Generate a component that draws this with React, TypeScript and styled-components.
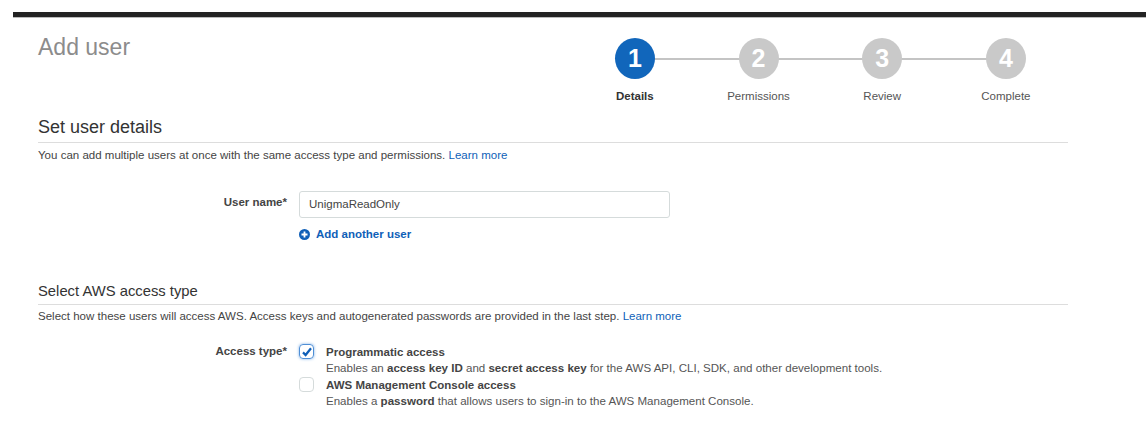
import styled, { createGlobalStyle } from 'styled-components'

const GlobalStyle = createGlobalStyle`
  html, body {
    margin: 0;
    background: #fff;
    font-family: "Liberation Sans", Arial, sans-serif;
    color: #444;
  }
`

const Page = styled.div`
  width: 1146px;
  height: 448px;
  padding: 12px 0 0 13px;
  box-sizing: border-box;
  overflow: hidden;
`

const TopBar = styled.div`
  height: 5px;
  background: #232323;
  border-bottom: 1px solid #bbb;
`

const Content = styled.div`
  width: 1030px;
  margin-left: 25px;
`

const Header = styled.div`
  display: flex;
  justify-content: space-between;
  height: 99px;
`

const PageTitle = styled.h1`
  margin: 15px 0 0;
  font-size: 23px;
  line-height: 28px;
  font-weight: 400;
  color: #8c8c8c;
`

const Stepper = styled.div`
  display: flex;
  margin-top: 20px;
  width: 495px;
`

const Step = styled.div`
  position: relative;
  width: 123.7px;
  display: flex;
  flex-direction: column;
  align-items: center;

  &:not(:last-child)::after {
    content: '';
    position: absolute;
    top: 20px;
    left: 50%;
    width: 100%;
    height: 2px;
    background: #c4c4c4;
  }
`

const Circle = styled.div<{ $active?: boolean }>`
  position: relative;
  z-index: 1;
  width: 40px;
  height: 41px;
  border-radius: 50%;
  background: ${(p) => (p.$active ? '#1166bb' : '#c9c9c9')};
  color: #fff;
  font-size: 25px;
  font-weight: 700;
  line-height: 41px;
  text-align: center;
`

const StepLabel = styled.div<{ $active?: boolean }>`
  margin-top: 10px;
  font-size: 11.5px;
  line-height: 14px;
  font-weight: ${(p) => (p.$active ? 700 : 400)};
  color: ${(p) => (p.$active ? '#333' : '#555')};
`

const SectionTitle = styled.h2<{ $small?: boolean }>`
  margin: 0;
  padding-bottom: 4px;
  font-size: ${(p) => (p.$small ? '14.8px' : '18px')};
  line-height: ${(p) => (p.$small ? '18px' : '21px')};
  font-weight: 400;
  color: #333;
  border-bottom: 1px solid #ddd;
`

const Hint = styled.p`
  margin: 5px 0 0;
  font-size: 11.53px;
  line-height: 14px;
  color: #444;
`

const Link = styled.a`
  color: #0f5fb8;
`

const FormRow = styled.div`
  display: grid;
  grid-template-columns: 249px 1fr;
  column-gap: 12px;
`

const Label = styled.div`
  text-align: right;
  font-size: 11.5px;
  font-weight: 700;
  line-height: 14px;
  color: #444;
`

const UserRow = styled(FormRow)`
  margin-top: 29px;
`

const UserLabel = styled(Label)`
  margin-top: 4px;
`

const Input = styled.div`
  width: 371px;
  height: 27px;
  box-sizing: border-box;
  padding-left: 9px;
  border: 1px solid #d5dbdb;
  border-radius: 3px;
  font-size: 11.5px;
  line-height: 25px;
  color: #444;
`

const AddUser = styled.div`
  display: flex;
  align-items: center;
  gap: 6px;
  margin-top: 9px;
  font-size: 11.5px;
  line-height: 14px;
  font-weight: 700;
  color: #0f5fb8;
`

const SecondSection = styled.div`
  margin-top: 41px;

  ${Hint} {
    margin-top: 4px;
  }
`

const AccessRow = styled(FormRow)`
  margin-top: 21px;
`

const Options = styled.div`
  display: flex;
  flex-direction: column;
`

const Option = styled.div`
  display: flex;
  gap: 12px;
  height: 33px;
`

const Box = styled.div<{ $checked?: boolean }>`
  width: 13px;
  height: 13px;
  flex: none;
  display: flex;
  align-items: center;
  justify-content: center;
  border-radius: 4px;
  border: 1px solid ${(p) => (p.$checked ? '#4f8fd6' : '#d5dbdb')};
  box-shadow: ${(p) => (p.$checked ? '0 0 3px #7fb0e6' : 'none')};
`

const OptionTitle = styled.div`
  font-size: 11.5px;
  line-height: 16px;
  font-weight: 700;
  color: #444;
`

const OptionText = styled.div`
  font-size: 11.55px;
  line-height: 17px;
  color: #555;

  b {
    color: #444;
  }
`

const steps = ['Details', 'Permissions', 'Review', 'Complete']

const App = () => {
  return (
    <Page>
      <GlobalStyle />
      <TopBar />
      <Content>
        <Header>
          <PageTitle>Add user</PageTitle>
          <Stepper>
            {steps.map((s, i) => (
              <Step key={s}>
                <Circle $active={i === 0}>{i + 1}</Circle>
                <StepLabel $active={i === 0}>{s}</StepLabel>
              </Step>
            ))}
          </Stepper>
        </Header>
        <SectionTitle>Set user details</SectionTitle>
        <Hint>
          You can add multiple users at once with the same access type and permissions. <Link>Learn more</Link>
        </Hint>
        <UserRow>
          <UserLabel>User name*</UserLabel>
          <div>
            <Input>UnigmaReadOnly</Input>
            <AddUser>
              <svg width='11' height='11' viewBox='0 0 11 11'>
                <circle cx='5.5' cy='5.5' r='5.5' fill='#0f5fb8' />
                <path d='M5.5 2.5v6M2.5 5.5h6' stroke='#fff' strokeWidth='1.8' />
              </svg>
              Add another user
            </AddUser>
          </div>
        </UserRow>
        <SecondSection>
          <SectionTitle $small>Select AWS access type</SectionTitle>
          <Hint>
            Select how these users will access AWS. Access keys and autogenerated passwords are provided in the last step. <Link>Learn more</Link>
          </Hint>
        </SecondSection>
        <AccessRow>
          <Label>Access type*</Label>
          <Options>
            <Option>
              <Box $checked>
                <svg width='10' height='10' viewBox='0 0 10 10'>
                  <path d='M1 5.4 3.6 8 9 1.2' fill='none' stroke='#0f5fb8' strokeWidth='2.2' />
                </svg>
              </Box>
              <div>
                <OptionTitle>Programmatic access</OptionTitle>
                <OptionText>
                  Enables an <b>access key ID</b> and <b>secret access key</b> for the AWS API, CLI, SDK, and other development tools.
                </OptionText>
              </div>
            </Option>
            <Option>
              <Box />
              <div>
                <OptionTitle>AWS Management Console access</OptionTitle>
                <OptionText>
                  Enables a <b>password</b> that allows users to sign-in to the AWS Management Console.
                </OptionText>
              </div>
            </Option>
          </Options>
        </AccessRow>
      </Content>
    </Page>
  )
}

export default App
